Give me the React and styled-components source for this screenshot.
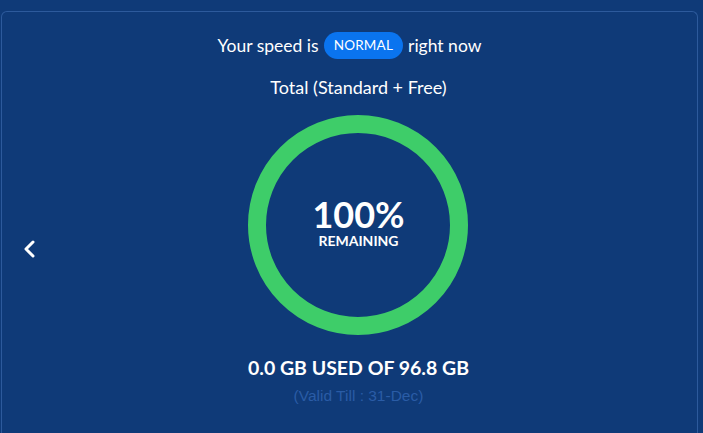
import React from "react";
import styled, { createGlobalStyle } from "styled-components";

const Global = createGlobalStyle`
  html, body {
    margin: 0;
    padding: 0;
    background: #0f3a78;
    font-family: Lato, "Open Sans", sans-serif;
  }
`;

const Page = styled.div`
  width: 703px;
  height: 433px;
  padding: 11px 5px 0 1px;
  box-sizing: border-box;
  background: #0f3a78;
`;

const Card = styled.div`
  position: relative;
  height: 422px;
  border: 1px solid #2d5a9c;
  border-bottom: none;
  border-radius: 6px 6px 0 0;
  box-sizing: border-box;
  display: flex;
  flex-direction: column;
  align-items: center;
  padding-top: 20px;
  color: #fff;
`;

const SpeedLine = styled.div`
  display: flex;
  align-items: center;
  gap: 5px;
  font-size: 17.5px;
`;

const Pill = styled.span`
  background: #0a74ef;
  border-radius: 14px;
  font-size: 13.5px;
  padding: 6px 10px;
  line-height: 15px;
  letter-spacing: 0.2px;
`;

const Body = styled.div`
  display: flex;
  flex-direction: column;
  align-items: center;
  padding-left: 18px;
`;

const Subtitle = styled.div`
  font-size: 18px;
  line-height: 22px;
  margin-top: 17px;
`;

const Ring = styled.div`
  margin-top: 17px;
  width: 220px;
  height: 220px;
  border-radius: 50%;
  border: 18px solid #3ecd69;
  box-sizing: border-box;
  display: flex;
  flex-direction: column;
  align-items: center;
  justify-content: center;
  padding-bottom: 5px;
`;

const Percent = styled.div`
  font-size: 36px;
  font-weight: 700;
  line-height: 36px;
`;

const Label = styled.div`
  font-size: 14px;
  font-weight: 700;
  line-height: 16px;
  margin-top: 1px;
`;

const Usage = styled.div`
  font-size: 19.5px;
  font-weight: 700;
  line-height: 24px;
  margin-top: 21px;
`;

const Valid = styled.div`
  font-family: "Liberation Sans", Arial, sans-serif;
  font-size: 15.5px;
  color: #2a5ca6;
  margin-top: 7px;
`;

const Arrow = styled.button`
  position: absolute;
  left: 18px;
  top: 225px;
  background: none;
  border: none;
  padding: 0;
  display: flex;
`;

export default function App() {
  return (
    <Page>
      <Global />
      <Card>
        <Arrow aria-label="previous">
          <svg width="20" height="24" viewBox="0 0 20 24">
            <path d="M13 5 L6 12 L13 19" stroke="#fff" strokeWidth="3" fill="none" strokeLinecap="round" strokeLinejoin="round" />
          </svg>
        </Arrow>
        <SpeedLine>
          Your speed is <Pill>NORMAL</Pill> right now
        </SpeedLine>
        <Body>
          <Subtitle>Total (Standard + Free)</Subtitle>
          <Ring>
            <Percent>100%</Percent>
            <Label>REMAINING</Label>
          </Ring>
          <Usage>0.0 GB USED OF 96.8 GB</Usage>
          <Valid>(Valid Till : 31-Dec)</Valid>
        </Body>
      </Card>
    </Page>
  );
}
